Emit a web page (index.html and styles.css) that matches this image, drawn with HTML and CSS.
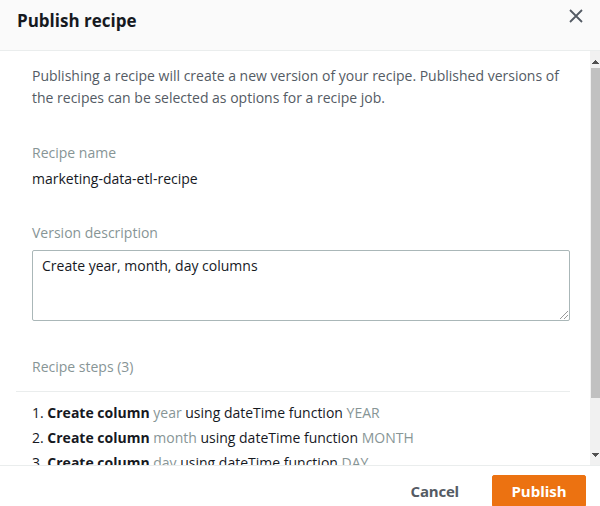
FILE: index.html
```html
<!DOCTYPE html>
<html>
<head>
<meta charset="utf-8">
<link rel="stylesheet" href="styles.css">
</head>
<body>
<div class="modal">
  <div class="header">
    <h2 class="title">Publish recipe</h2>
    <button class="close" aria-label="Close">
      <svg width="14" height="14" viewBox="0 0 14 14"><path d="M1 1 L13 13 M13 1 L1 13" stroke="#545b64" stroke-width="1.8" fill="none"/></svg>
    </button>
  </div>
  <div class="main">
    <div class="content">
      <p class="intro">Publishing a recipe will create a new version of your recipe. Published versions of the recipes can be selected as options for a recipe job.</p>
      <div class="field">
        <div class="label">Recipe name</div>
        <div class="value">marketing-data-etl-recipe</div>
      </div>
      <div class="field">
        <div class="label">Version description</div>
        <div class="textarea">Create year, month, day columns<span class="grip"></span></div>
      </div>
      <div class="field steps-head">
        <div class="label">Recipe steps (3)</div>
      </div>
      <ol class="steps">
        <li>1. <b>Create column</b> <span class="muted">year</span> using dateTime function <span class="muted">YEAR</span></li>
        <li>2. <b>Create column</b> <span class="muted">month</span> using dateTime function <span class="muted">MONTH</span></li>
        <li>3. <b>Create column</b> <span class="muted">day</span> using dateTime function <span class="muted">DAY</span></li>
      </ol>
    </div>
    <div class="scrollbar">
      <div class="sb-btn up"></div>
      <div class="sb-thumb"></div>
      <div class="sb-rest"></div>
      <div class="sb-btn down"></div>
    </div>
  </div>
  <div class="footer">
    <button class="btn-link">Cancel</button>
    <button class="btn-primary">Publish</button>
  </div>
</div>
</body>
</html>
```
FILE: styles.css
```css
* { box-sizing: border-box; }
html, body { margin: 0; padding: 0; }
body {
  width: 600px;
  height: 506px;
  overflow: hidden;
  font-family: "Open Sans", "Noto Sans", sans-serif;
  color: #16191f;
  background: #fff;
}
.modal {
  height: 506px;
  display: flex;
  flex-direction: column;
}
.header {
  height: 51px;
  flex: none;
  background: #fafafa;
  border-bottom: 1px solid #eaeded;
  display: flex;
  align-items: center;
  justify-content: space-between;
  padding: 0 16px 0 17px;
}
.title {
  margin: 0;
  font-size: 17px;
  font-weight: 700;
  color: #16191f;
  position: relative;
  top: -5px;
}
.close {
  border: 0;
  background: none;
  padding: 0;
  width: 14px;
  height: 14px;
  display: flex;
  position: relative;
  top: -9px;
  right: 1px;
}
.main {
  flex: 1;
  min-height: 0;
  display: flex;
}
.content {
  flex: 1;
  overflow: hidden;
  padding: 14px 20px 0 16px;
}
.intro {
  margin: 0;
  padding-left: 16px;
  font-size: 14px;
  line-height: 22px;
  color: #545b64;
}
.field {
  padding-left: 16px;
  margin-top: 34px;
}
.label {
  font-size: 14px;
  line-height: 20px;
  color: #879596;
}
.value {
  margin-top: 6px;
  font-size: 14px;
  line-height: 20px;
  color: #16191f;
}
.textarea {
  position: relative;
  margin-top: 7px;
  height: 71px;
  border: 1px solid #aab7b8;
  border-radius: 2px;
  padding: 5px 9px;
  font-size: 14px;
  line-height: 20px;
  color: #16191f;
}
.grip {
  position: absolute;
  right: 1px;
  bottom: 1px;
  width: 8px;
  height: 8px;
  background: linear-gradient(135deg, transparent 45%, #999 45%, #999 52%, transparent 52%, transparent 70%, #999 70%, #999 77%, transparent 77%);
}
.field.steps-head {
  margin-top: 36px;
  padding-bottom: 14px;
  border-bottom: 1px solid #eaeded;
}
.steps {
  list-style: none;
  margin: 0;
  padding: 8px 0 0 16px;
}
.steps li {
  font-size: 14px;
  line-height: 25px;
  color: #16191f;
}
.steps b { font-weight: 700; }
.muted { color: #879596; }
.scrollbar {
  width: 10px;
  flex: none;
  background: #f1f1f1;
  display: flex;
  flex-direction: column;
}
.sb-btn {
  height: 15px;
  flex: none;
  background-repeat: no-repeat;
  background-size: 7px 4px;
  background-position: center;
}
.sb-btn.up {
  background-image: conic-gradient(from 135deg at 50% 0, #505050 0 90deg, transparent 0);
  background-position: 50% 9px;
}
.sb-btn.down {
  background-image: conic-gradient(from -45deg at 50% 100%, #505050 0 90deg, transparent 0);
  background-position: 50% 3px;
}
.sb-thumb {
  height: 330px;
  margin: 2px 0 0 1px;
  background: #c1c1c1;
  flex: none;
}
.sb-rest { flex: 1; }
.footer {
  height: 41px;
  flex: none;
  border-top: 1px solid #eaeded;
  display: flex;
  justify-content: flex-end;
  align-items: flex-start;
  padding: 9px 14px 0 0;
  gap: 33px;
}
.btn-link {
  border: 0;
  background: none;
  font-family: inherit;
  font-size: 15px;
  font-weight: 700;
  color: #545b64;
  padding: 0;
  height: 32px;
  line-height: 32px;
  letter-spacing: -0.2px;
}
.btn-primary {
  border: 1px solid #ec7211;
  background: #ec7211;
  color: #fff;
  font-family: inherit;
  font-size: 15px;
  font-weight: 700;
  border-radius: 2px;
  width: 94px;
  height: 32px;
  padding: 0;
}
```
